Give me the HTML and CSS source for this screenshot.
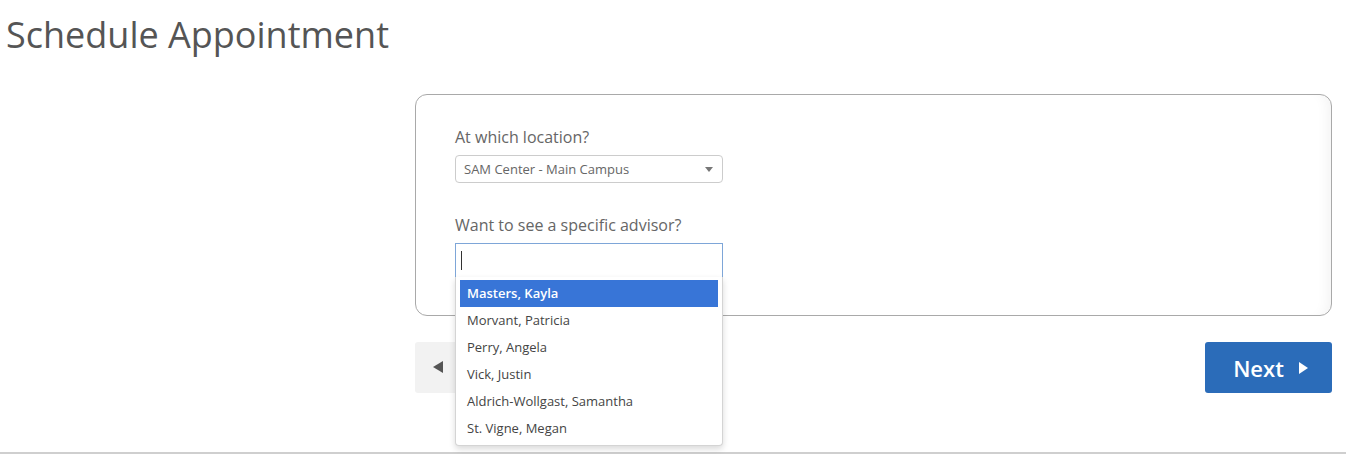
FILE: index.html
```html
<!DOCTYPE html>
<html lang="en">
<head>
  <link rel="stylesheet" href="styles.css">
</head>
<body>
  <h1 class="page-title">Schedule Appointment</h1>
  <div class="layout">
    <div class="side"></div>
    <div class="main">
      <div class="card">
        <div class="field">
          <div class="label">At which location?</div>
          <div class="select">
            <span>SAM Center - Main Campus</span>
            <span class="caret"></span>
          </div>
        </div>
        <div class="field">
          <div class="label">Want to see a specific advisor?</div>
          <div class="combo">
            <div class="search"><span class="cursor"></span></div>
            <ul class="results">
              <li class="active">Masters, Kayla</li>
              <li>Morvant, Patricia</li>
              <li>Perry, Angela</li>
              <li>Vick, Justin</li>
              <li>Aldrich-Wollgast, Samantha</li>
              <li>St. Vigne, Megan</li>
            </ul>
          </div>
        </div>
      </div>
      <div class="actions">
        <button class="btn-back"><span class="tri-left"></span></button>
        <button class="btn-next">Next <span class="tri-right"></span></button>
      </div>
    </div>
  </div>
  <div class="footer-line"></div>
</body>
</html>
```
FILE: styles.css
```css
body {
    margin: 0;
    padding: 0;
    background: #fff;
    font-family: "Open Sans", "DejaVu Sans", sans-serif;
    color: #555;
}
.page-title {
    margin: 0;
    padding: 11px 0 0 6px;
    font-size: 36px;
    font-weight: 400;
    line-height: 47px;
    color: #555;
}
.layout {
    display: grid;
    grid-template-columns: 415px 1fr;
    padding-right: 14px;
    margin-top: 36px;
}
.card {
    border: 1px solid #a9a9a9;
    border-radius: 12px;
    padding: 31px 39px 38px;
    box-shadow: inset -12px 0 14px -10px rgba(0, 0, 0, 0.06);
}
.field + .field {
    margin-top: 31px;
}
.label {
    font-size: 16px;
    line-height: 22px;
    color: #666;
    margin-bottom: 7px;
}
.select {
    width: 268px;
    height: 28px;
    box-sizing: border-box;
    border: 1px solid #ccc;
    border-radius: 4px;
    display: flex;
    align-items: center;
    justify-content: space-between;
    padding: 0 9px 0 8px;
    font-size: 13px;
    color: #666;
}
.caret {
    width: 0;
    height: 0;
    border-left: 4px solid transparent;
    border-right: 4px solid transparent;
    border-top: 5px solid #777;
}
.combo {
    position: relative;
    width: 268px;
}
.search {
    height: 34px;
    box-sizing: border-box;
    border: 1px solid #7ea6d8;
    border-bottom: none;
    padding: 7px 5px;
}
.cursor {
    display: block;
    width: 1px;
    height: 19px;
    background: #333;
}
.results {
    position: absolute;
    top: 34px;
    left: 0;
    width: 268px;
    box-sizing: border-box;
    margin: 0;
    padding: 3px 4px;
    list-style: none;
    background: #fff;
    border: 1px solid #d4d4d4;
    border-top: none;
    border-radius: 0 0 4px 4px;
    box-shadow: 0 3px 6px rgba(0, 0, 0, 0.15);
    z-index: 5;
}
.results li {
    height: 27px;
    line-height: 27px;
    padding-left: 7px;
    font-size: 13px;
    color: #444;
}
.results li.active {
    background: #3875d7;
    color: #fff;
    font-weight: 600;
}
.actions {
    display: flex;
    justify-content: space-between;
    margin-top: 26px;
}
.actions button {
    height: 51px;
    border: none;
    border-radius: 3px;
    font-family: inherit;
    cursor: pointer;
}
.btn-back {
    width: 60px;
    background: #f2f2f2;
    padding: 0 0 0 18px;
    text-align: left;
}
.tri-left {
    display: inline-block;
    width: 0;
    height: 0;
    border-top: 6px solid transparent;
    border-bottom: 6px solid transparent;
    border-right: 10px solid #555;
}
.btn-next {
    width: 127px;
    background: #2b6cb9;
    color: #fff;
    font-size: 22px;
    font-weight: 600;
    padding: 0 0 0 4px;
    display: flex;
    align-items: center;
    justify-content: center;
    gap: 15px;
}
.tri-right {
    display: inline-block;
    width: 0;
    height: 0;
    border-top: 6px solid transparent;
    border-bottom: 6px solid transparent;
    border-left: 9px solid #fff;
}
.footer-line {
    margin-top: 59px;
    border-top: 2px solid #cfcfcf;
}
```
